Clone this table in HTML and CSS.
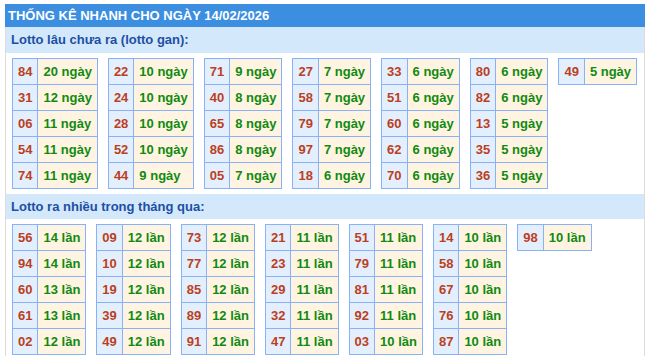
FILE: index.html
```html
<!DOCTYPE html>
<html lang="vi">
<head>
<meta charset="utf-8">
<title>Thống kê nhanh</title>
<link rel="stylesheet" href="styles.css">
</head>
<body>
<div class="box">
  <div class="title">THỐNG KÊ NHANH CHO NGÀY 14/02/2026</div>
  <div class="sub">Lotto lâu chưa ra (lotto gan):</div>
  <div class="group g1">
    <table><tr><td class="n">84</td><td class="v">20 ngày</td></tr><tr><td class="n">31</td><td class="v">12 ngày</td></tr><tr><td class="n">06</td><td class="v">11 ngày</td></tr><tr><td class="n">54</td><td class="v">11 ngày</td></tr><tr><td class="n">74</td><td class="v">11 ngày</td></tr></table>
    <table><tr><td class="n">22</td><td class="v">10 ngày</td></tr><tr><td class="n">24</td><td class="v">10 ngày</td></tr><tr><td class="n">28</td><td class="v">10 ngày</td></tr><tr><td class="n">52</td><td class="v">10 ngày</td></tr><tr><td class="n">44</td><td class="v">9 ngày</td></tr></table>
    <table><tr><td class="n">71</td><td class="v">9 ngày</td></tr><tr><td class="n">40</td><td class="v">8 ngày</td></tr><tr><td class="n">65</td><td class="v">8 ngày</td></tr><tr><td class="n">86</td><td class="v">8 ngày</td></tr><tr><td class="n">05</td><td class="v">7 ngày</td></tr></table>
    <table><tr><td class="n">27</td><td class="v">7 ngày</td></tr><tr><td class="n">58</td><td class="v">7 ngày</td></tr><tr><td class="n">79</td><td class="v">7 ngày</td></tr><tr><td class="n">97</td><td class="v">7 ngày</td></tr><tr><td class="n">18</td><td class="v">6 ngày</td></tr></table>
    <table><tr><td class="n">33</td><td class="v">6 ngày</td></tr><tr><td class="n">51</td><td class="v">6 ngày</td></tr><tr><td class="n">60</td><td class="v">6 ngày</td></tr><tr><td class="n">62</td><td class="v">6 ngày</td></tr><tr><td class="n">70</td><td class="v">6 ngày</td></tr></table>
    <table><tr><td class="n">80</td><td class="v">6 ngày</td></tr><tr><td class="n">82</td><td class="v">6 ngày</td></tr><tr><td class="n">13</td><td class="v">5 ngày</td></tr><tr><td class="n">35</td><td class="v">5 ngày</td></tr><tr><td class="n">36</td><td class="v">5 ngày</td></tr></table>
    <table><tr><td class="n">49</td><td class="v">5 ngày</td></tr></table>
  </div>
  <div class="sub sub2">Lotto ra nhiều trong tháng qua:</div>
  <div class="group g2">
    <table><tr><td class="n">56</td><td class="v">14 lần</td></tr><tr><td class="n">94</td><td class="v">14 lần</td></tr><tr><td class="n">60</td><td class="v">13 lần</td></tr><tr><td class="n">61</td><td class="v">13 lần</td></tr><tr><td class="n">02</td><td class="v">12 lần</td></tr></table>
    <table><tr><td class="n">09</td><td class="v">12 lần</td></tr><tr><td class="n">10</td><td class="v">12 lần</td></tr><tr><td class="n">19</td><td class="v">12 lần</td></tr><tr><td class="n">39</td><td class="v">12 lần</td></tr><tr><td class="n">49</td><td class="v">12 lần</td></tr></table>
    <table><tr><td class="n">73</td><td class="v">12 lần</td></tr><tr><td class="n">77</td><td class="v">12 lần</td></tr><tr><td class="n">85</td><td class="v">12 lần</td></tr><tr><td class="n">89</td><td class="v">12 lần</td></tr><tr><td class="n">91</td><td class="v">12 lần</td></tr></table>
    <table><tr><td class="n">21</td><td class="v">11 lần</td></tr><tr><td class="n">23</td><td class="v">11 lần</td></tr><tr><td class="n">29</td><td class="v">11 lần</td></tr><tr><td class="n">32</td><td class="v">11 lần</td></tr><tr><td class="n">47</td><td class="v">11 lần</td></tr></table>
    <table><tr><td class="n">51</td><td class="v">11 lần</td></tr><tr><td class="n">79</td><td class="v">11 lần</td></tr><tr><td class="n">81</td><td class="v">11 lần</td></tr><tr><td class="n">92</td><td class="v">11 lần</td></tr><tr><td class="n">03</td><td class="v">10 lần</td></tr></table>
    <table><tr><td class="n">14</td><td class="v">10 lần</td></tr><tr><td class="n">58</td><td class="v">10 lần</td></tr><tr><td class="n">67</td><td class="v">10 lần</td></tr><tr><td class="n">76</td><td class="v">10 lần</td></tr><tr><td class="n">87</td><td class="v">10 lần</td></tr></table>
    <table><tr><td class="n">98</td><td class="v">10 lần</td></tr></table>
  </div>
</div>
</body>
</html>
```

FILE: styles.css
```css
html, body {
  margin: 0;
  padding: 0;
  background: #ffffff;
}
body {
  font-family: "Liberation Sans", Arial, sans-serif;
  font-size: 13px;
  font-weight: bold;
}
.box {
  margin: 4px 1px 0 5px;
  border-left: 1px solid #dcdcdc;
  border-right: 1px solid #dcdcdc;
  min-height: 352px;
  box-sizing: border-box;
}
.title {
  background: #3c8ee0;
  color: #ffffff;
  height: 23px;
  line-height: 23px;
  padding-left: 3px;
  margin-left: -1px;
  margin-right: -1px;
  white-space: nowrap;
}
.sub {
  background: #d4e8fc;
  color: #1d4fa3;
  height: 26px;
  line-height: 26px;
  padding-left: 5px;
}
.sub2 {
  height: 25px;
  line-height: 25px;
}
.group {
  display: flex;
  align-items: flex-start;
  gap: 10px;
  padding: 5px 0 0 6px;
}
.g1 {
  height: 141px;
  box-sizing: border-box;
}
table {
  border-collapse: collapse;
}
td {
  border: 1px solid #88b2f7;
  height: 25px;
  padding: 0 5px;
  line-height: 15px;
  white-space: nowrap;
}
td.n {
  background: #e3effd;
  color: #bb3f1d;
  text-align: center;
}
td.v {
  background: #fff4e2;
  color: #108a10;
}
```
